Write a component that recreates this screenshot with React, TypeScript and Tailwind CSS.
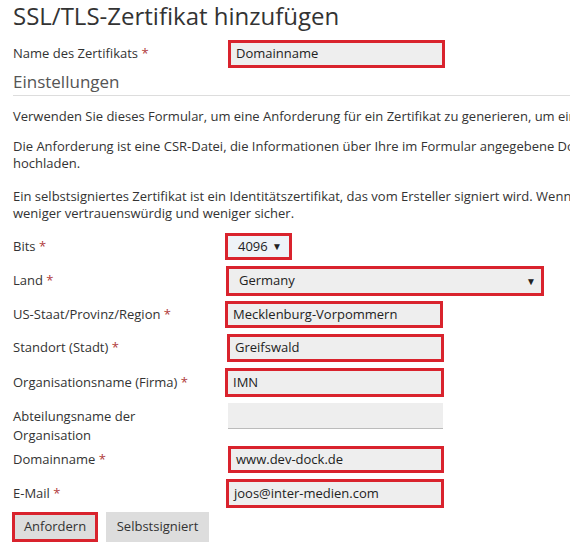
const red = "border-[3px] border-[#d9232d]";

type Row = {
  label: string;
  required?: boolean;
  value: string;
  box: string;
};

const rows: Row[] = [
  { label: "US-Staat/Provinz/Region", required: true, value: "Mecklenburg-Vorpommern", box: "ml-[-3px] h-[27px] w-[218px]" },
  { label: "Standort (Stadt)", required: true, value: "Greifswald", box: "ml-[-1px] h-[28px] w-[217px]" },
  { label: "Organisationsname (Firma)", required: true, value: "IMN", box: "ml-[-3px] h-[29px] w-[219px]" },
];

function Star() {
  return <span className="text-[#b03a3a]"> *</span>;
}

function Field({ box, value }: { box: string; value: string }) {
  return (
    <div className={`${box} ${red} flex items-center bg-[#eeeeee] pl-[5px] text-[13px] text-[#222]`}>
      {value}
    </div>
  );
}

export default function App() {
  return (
    <div className="h-[550px] w-[570px] overflow-hidden bg-white font-['Open_Sans',sans-serif] text-[#333]">
      <div className="w-[800px] px-[13px]">
        <h1 className="text-[24px] leading-[32px] font-normal text-[#333]">SSL/TLS-Zertifikat hinzufügen</h1>

        <div className="mt-[8px] flex items-center">
          <div className="w-[215px] text-[13px]">
            Name des Zertifikats<Star />
          </div>
          <Field box="h-[28px] w-[217px]" value="Domainname" />
        </div>

        <div className="mt-[2px] border-b border-[#dddddd] pb-[2px] text-[17px] leading-[23px] text-[#555]">Einstellungen</div>

        <div className="mt-[12px] text-[13px] leading-[17px]">
          <p className="whitespace-nowrap">
            Verwenden Sie dieses Formular, um eine Anforderung für ein Zertifikat zu generieren, um ein selbstsigniertes Zertifikat zu erstellen.
          </p>
          <p className="mt-[13px] whitespace-nowrap">
            Die Anforderung ist eine CSR-Datei, die Informationen über Ihre im Formular angegebene Domain enthält. Sie müssen diese Datei bei einer Zertifizierungsstelle
            <br />
            hochladen.
          </p>
          <p className="mt-[16px] whitespace-nowrap">
            Ein selbstsigniertes Zertifikat ist ein Identitätszertifikat, das vom Ersteller signiert wird. Wenn Sie ein solches Zertifikat verwenden, ist Ihre Website
            <br />
            weniger vertrauenswürdig und weniger sicher.
          </p>
        </div>

        <div className="mt-[11px] flex items-center">
          <div className="w-[215px] text-[13px]">
            Bits<Star />
          </div>
          <div className={`ml-[-3px] flex h-[27px] w-[67px] items-center justify-between ${red} bg-[#eef3f8] pr-[7px] pl-[10px] text-[13px] text-[#222]`}>
            <span>4096</span>
            <span className="text-[10px]">▼</span>
          </div>
        </div>

        <div className="mt-[6px] flex items-center">
          <div className="w-[215px] text-[13px]">
            Land<Star />
          </div>
          <div className={`ml-[-2px] flex h-[30px] w-[318px] items-center justify-between ${red} bg-[#eeeeee] pr-[5px] pl-[10px] text-[13px] text-[#222]`}>
            <span>Germany</span>
            <span className="text-[10px]">▼</span>
          </div>
        </div>

        <div className="mt-[5px] flex flex-col gap-[6px]">
          {rows.map((r) => (
            <div key={r.label} className="flex items-center">
              <div className="w-[215px] text-[13px]">
                {r.label}
                {r.required && <Star />}
              </div>
              <Field box={r.box} value={r.value} />
            </div>
          ))}
        </div>

        <div className="mt-[3px] flex items-start">
          <div className="w-[215px] pt-[7px] text-[13px] leading-[19px]">
            Abteilungsname der
            <br />
            Organisation
          </div>
          <div className="mt-[3px] h-[26px] w-[215px] border-b border-[#bbbbbb] bg-[#eeeeee]" />
        </div>

        <div className="mt-[1px] flex items-center">
          <div className="w-[215px] text-[13px]">
            Domainname<Star />
          </div>
          <Field box="h-[27px] w-[216px]" value="www.dev-dock.de" />
        </div>

        <div className="mt-[6px] flex items-center">
          <div className="w-[215px] text-[13px]">
            E-Mail<Star />
          </div>
          <Field box="ml-[-2px] h-[29px] w-[218px]" value="joos@inter-medien.com" />
        </div>

        <div className="mt-[4px] flex items-center gap-[8px]">
          <button className={`ml-[-1px] h-[30px] w-[86px] ${red} bg-[#dddddd] text-[13px] text-[#333]`}>Anfordern</button>
          <button className="h-[30px] w-[103px] bg-[#dddddd] text-[13px] text-[#333]">Selbstsigniert</button>
        </div>
      </div>
    </div>
  );
}
